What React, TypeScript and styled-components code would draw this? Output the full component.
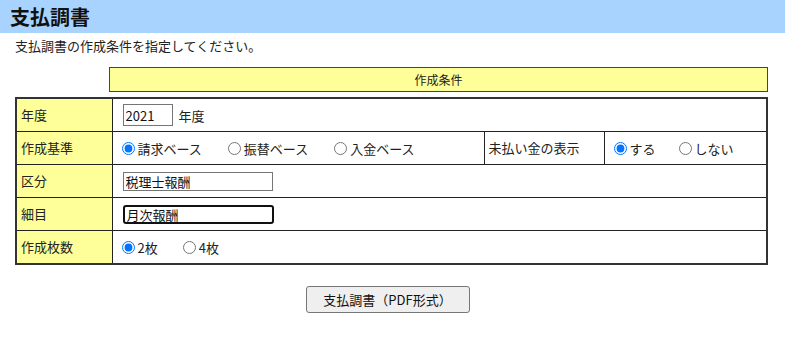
import styled, { createGlobalStyle } from 'styled-components'

const GlobalStyle = createGlobalStyle`
    body {
        margin: 0;
        background: #fff;
        font-family: "Noto Sans CJK JP", "Noto Sans", sans-serif;
        color: #222;
    }
`

const Page = styled.div`
    width: 785px;
    height: 338px;
    overflow: hidden;
`

const Header = styled.div`
    height: 33px;
    background: #a9d3ff;
    display: flex;
    align-items: center;
    padding-left: 10px;
`

const Title = styled.h1`
    margin: 0;
    font-size: 20px;
    font-weight: 700;
    color: #111;
`

const Lead = styled.p`
    margin: 3px 0 0 15px;
    font-size: 13px;
    line-height: 20px;
`

const Caption = styled.div`
    margin: 11px 0 0 109px;
    width: 657px;
    height: 23px;
    background: #ffff99;
    border: 1px solid #444;
    font-size: 12px;
    line-height: 23px;
    text-align: center;
`

const Table = styled.table`
    margin: 5px 0 0 15px;
    width: 753px;
    border-collapse: collapse;
    border: 2px solid #333;
    table-layout: fixed;
`

const Label = styled.td<{ $w?: number }>`
    height: 30px;
    padding: 0 4px 2px 4px;
    background: ${p => (p.$w ? '#ffff99' : '#fff')};
    border: 1px solid #222;
    font-size: 13px;
    vertical-align: middle;
`

const Cell = styled.td`
    height: 32px;
    padding: 0 0 0 6px;
    border: 1px solid #222;
    font-size: 13px;
    vertical-align: middle;
`

const Row = styled.div`
    display: flex;
    align-items: center;
`

const Choice = styled.label<{ $gap: number }>`
    display: inline-flex;
    align-items: center;
    margin-right: ${p => p.$gap}px;
    font-size: 13px;

    input {
        margin: 0 3px 0 3px;
        width: 13px;
        height: 13px;
    }
`

const TextBox = styled.input<{ $w: number; $focus?: boolean }>`
    box-sizing: border-box;
    width: ${p => p.$w}px;
    height: ${p => (p.$w === 50 ? 22 : 19)}px;
    margin: 0 0 0 4px;
    padding: 0 2px;
    font-family: "Noto Sans CJK JP", sans-serif;
    font-size: 13px;
    color: #111;
    border: ${p => (p.$focus ? '2px solid #111' : '1px solid #767676')};
    border-radius: ${p => (p.$focus ? '3px' : '0')};
    outline: none;
`

const Unit = styled.span`
    margin-left: 6px;
`

const Actions = styled.div`
    display: flex;
    justify-content: center;
    padding: 21px 10px 0 0;
`

const Button = styled.button`
    width: 164px;
    height: 27px;
    background: #efefef;
    border: 1px solid #767676;
    border-radius: 3px;
    font-family: "Noto Sans CJK JP", sans-serif;
    font-size: 13px;
    color: #111;
`

const App = () => {
    return (
        <Page>
            <GlobalStyle />
            <Header>
                <Title>支払調書</Title>
            </Header>
            <Lead>支払調書の作成条件を指定してください。</Lead>
            <Caption>作成条件</Caption>
            <Table>
                <colgroup>
                    <col style={{ width: 96 }} />
                    <col style={{ width: 372 }} />
                    <col style={{ width: 120 }} />
                    <col />
                </colgroup>
                <tbody>
                    <tr>
                        <Label $w={95}>年度</Label>
                        <Cell colSpan={3}>
                            <Row>
                                <TextBox $w={50} defaultValue="2021" />
                                <Unit>年度</Unit>
                            </Row>
                        </Cell>
                    </tr>
                    <tr>
                        <Label $w={95}>作成基準</Label>
                        <Cell>
                            <Row>
                                <Choice $gap={23}><input type="radio" name="base" defaultChecked />請求ベース</Choice>
                                <Choice $gap={23}><input type="radio" name="base" />振替ベース</Choice>
                                <Choice $gap={0}><input type="radio" name="base" />入金ベース</Choice>
                            </Row>
                        </Cell>
                        <Label>未払い金の表示</Label>
                        <Cell>
                            <Row>
                                <Choice $gap={20}><input type="radio" name="unpaid" defaultChecked />する</Choice>
                                <Choice $gap={0}><input type="radio" name="unpaid" />しない</Choice>
                            </Row>
                        </Cell>
                    </tr>
                    <tr>
                        <Label $w={95}>区分</Label>
                        <Cell colSpan={3}>
                            <TextBox $w={150} defaultValue="税理士報酬" />
                        </Cell>
                    </tr>
                    <tr>
                        <Label $w={95}>細目</Label>
                        <Cell colSpan={3}>
                            <TextBox $w={151} $focus defaultValue="月次報酬" />
                        </Cell>
                    </tr>
                    <tr>
                        <Label $w={95}>作成枚数</Label>
                        <Cell colSpan={3}>
                            <Row>
                                <Choice $gap={22}><input type="radio" name="copies" defaultChecked />2枚</Choice>
                                <Choice $gap={0}><input type="radio" name="copies" />4枚</Choice>
                            </Row>
                        </Cell>
                    </tr>
                </tbody>
            </Table>
            <Actions>
                <Button>支払調書（PDF形式）</Button>
            </Actions>
        </Page>
    )
}

export default App
